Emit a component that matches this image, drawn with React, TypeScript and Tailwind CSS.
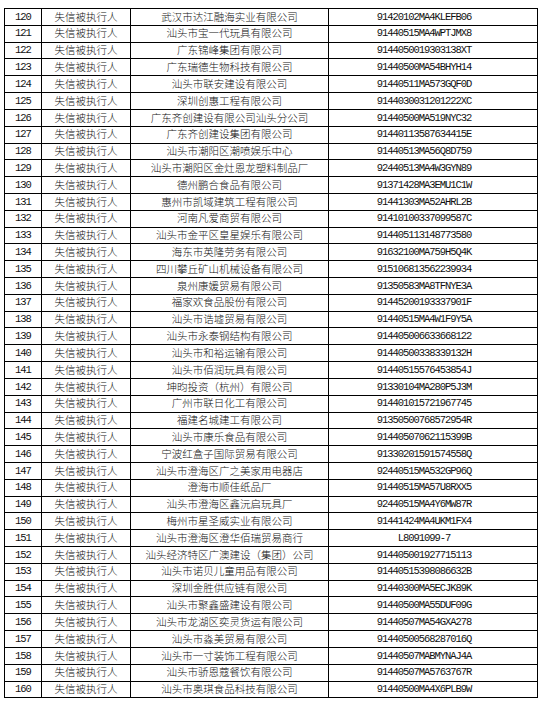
import React from 'react';

type Row = [string, string];

// name, credit code — rows 120..160
const ROWS: Row[] = [
  ['武汉市达江融海实业有限公司', '91420102MA4KLEFB06'],
  ['汕头市宝一代玩具有限公司', '91440515MA4WPTJMX8'],
  ['广东锦峰集团有限公司', '9144050019303138XT'],
  ['广东瑞德生物科技有限公司', '91440500MA54BHYH14'],
  ['汕头市联安建设有限公司', '91440511MA573GQF0D'],
  ['深圳创惠工程有限公司', '9144030031201222XC'],
  ['广东齐创建设有限公司汕头分公司', '91440500MA519NYC32'],
  ['广东齐创建设集团有限公司', '91440113587634415E'],
  ['汕头市潮阳区潮喷娱乐中心', '91440513MA56Q8D759'],
  ['汕头市潮阳区金灶恩龙塑料制品厂', '92440513MA4W3GYN89'],
  ['德州鹏合食品有限公司', '91371428MA3EMU1C1W'],
  ['惠州市凯域建筑工程有限公司', '91441303MA52AHRL2B'],
  ['河南凡爱商贸有限公司', '91410100337099587C'],
  ['汕头市金平区皇星娱乐有限公司', '914405113148773580'],
  ['海东市英隆劳务有限公司', '91632100MA759H5Q4K'],
  ['四川攀丘矿山机械设备有限公司', '915106813562239934'],
  ['泉州康媛贸易有限公司', '91350583MA8TFNYE3A'],
  ['福家欢食品股份有限公司', '91445200193337901F'],
  ['汕头市诰墟贸易有限公司', '91440515MA4W1F9Y5A'],
  ['汕头市永泰钢结构有限公司', '914405006633668122'],
  ['汕头市和裕运输有限公司', '91440500338339132H'],
  ['汕头市佰润玩具有限公司', '91440515576453854J'],
  ['坤昀投资（杭州）有限公司', '91330104MA280P5J3M'],
  ['广州市联日化工有限公司', '914401015721967745'],
  ['福建名城建工有限公司', '91350500768572954R'],
  ['汕头市康乐食品有限公司', '91440507062115399B'],
  ['宁波红盒子国际贸易有限公司', '91330201591574558Q'],
  ['汕头市澄海区广之美家用电器店', '92440515MA532GP96Q'],
  ['澄海市顺佳纸品厂', '91440515MA57U8RXX5'],
  ['汕头市澄海区鑫沅启玩具厂', '92440515MA4Y6MW87R'],
  ['梅州市星圣威实业有限公司', '91441424MA4UKM1FX4'],
  ['汕头市澄海区澄华佰瑞贸易商行', 'L8091099-7'],
  ['汕头经济特区广澳建设（集团）公司', '914405001927715113'],
  ['汕头市诺贝儿童用品有限公司', '91440515398086632B'],
  ['深圳金胜供应链有限公司', '91440300MA5ECJK89K'],
  ['汕头市聚鑫盛建设有限公司', '91440500MA55DUF09G'],
  ['汕头市龙湖区奕灵货运有限公司', '91440507MA54GXA278'],
  ['汕头市淼美贸易有限公司', '91440500568287016Q'],
  ['汕头市一寸装饰工程有限公司', '91440507MABMYNAJ4A'],
  ['汕头市骄恩蔻餐饮有限公司', '91440507MA5763767R'],
  ['汕头市奥琪食品科技有限公司', '91440500MA4X6PLB9W'],
];

const cell = 'border border-black p-0 text-center align-middle whitespace-nowrap';
const cjk = "font-['SimSun','Noto_Sans_CJK_SC',sans-serif] font-light text-[10.5px] leading-none";
const mono = "font-['Liberation_Mono',monospace] text-[10.5px] tracking-[-1.05px] leading-none";

export default function App() {
  return (
    <div className="w-[541px] h-[707px] bg-white text-[#111] pt-[8px] pl-[4px]">
      <table className="table-fixed border-collapse w-[533px]">
        <colgroup>
          <col className="w-[37px]" />
          <col className="w-[89px]" />
          <col className="w-[198px]" />
          <col className="w-[209px]" />
        </colgroup>
        <tbody>
          {ROWS.map(([name, code], i) => (
            <tr key={i} className="h-[16.82px]">
              <td className={`${cell} ${mono}`}>{120 + i}</td>
              <td className={`${cell} ${cjk}`}>失信被执行人</td>
              <td className={`${cell} ${cjk}`}>{name}</td>
              <td className={`${cell} ${mono} pr-[18px]`}>{code}</td>
            </tr>
          ))}
        </tbody>
      </table>
    </div>
  );
}
